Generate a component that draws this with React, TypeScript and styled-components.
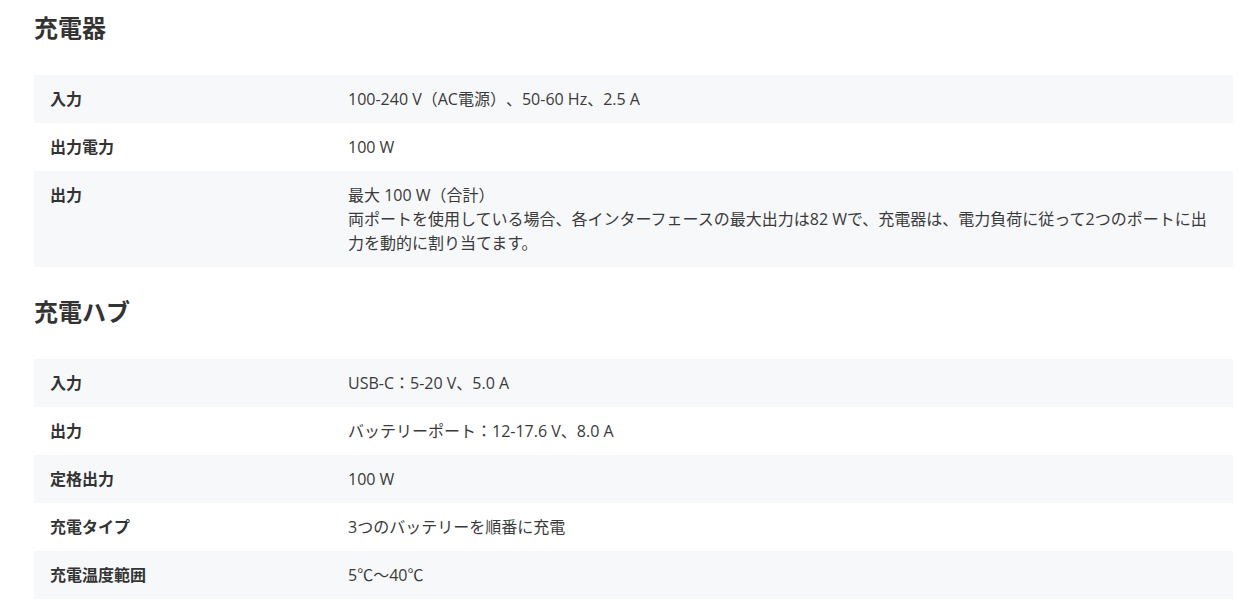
import React from "react";
import styled, { createGlobalStyle } from "styled-components";

const Global = createGlobalStyle`
  html, body { margin: 0; padding: 0; background: #fff; }
  body {
    font-family: "Open Sans", "Noto Sans CJK JP", sans-serif;
    color: #333;
    text-spacing-trim: space-all;
  }
`;

const Page = styled.div`
  padding: 0 6px 0 34px;
`;

const Section = styled.section`
  padding-top: 12px;
  padding-bottom: 17px;
`;

const Heading = styled.h2`
  margin: 0 0 31px;
  font-size: 24px;
  line-height: 32px;
  font-weight: 700;
  color: #333;
`;

const Table = styled.div`
  display: flex;
  flex-direction: column;
`;

const Row = styled.div<{ $alt: boolean }>`
  display: grid;
  grid-template-columns: 298px 1fr;
  background: ${(p) => (p.$alt ? "#f7f8fa" : "#fff")};
  padding: 12px 16px;
  font-size: 16px;
  line-height: 24px;
`;

const Label = styled.div`
  font-weight: 700;
  color: #333;
`;

const Value = styled.div`
  color: #3a3a3a;
  padding-right: 4px;
`;

type Spec = { label: string; value: string[] };

const charger: Spec[] = [
  { label: "入力", value: ["100-240 V（AC電源）、50-60 Hz、2.5 A"] },
  { label: "出力電力", value: ["100 W"] },
  {
    label: "出力",
    value: [
      "最大 100 W（合計）",
      "両ポートを使用している場合、各インターフェースの最大出力は82 Wで、充電器は、電力負荷に従って2つのポートに出力を動的に割り当てます。",
    ],
  },
];

const hub: Spec[] = [
  { label: "入力", value: ["USB-C：5-20 V、5.0 A"] },
  { label: "出力", value: ["バッテリーポート：12-17.6 V、8.0 A"] },
  { label: "定格出力", value: ["100 W"] },
  { label: "充電タイプ", value: ["3つのバッテリーを順番に充電"] },
  { label: "充電温度範囲", value: ["5℃～40℃"] },
];

function SpecTable({ title, items }: { title: string; items: Spec[] }) {
  return (
    <Section>
      <Heading>{title}</Heading>
      <Table>
        {items.map((it, i) => (
          <Row key={i} $alt={i % 2 === 0}>
            <Label>{it.label}</Label>
            <Value>
              {it.value.map((v, j) => (
                <div key={j}>{v}</div>
              ))}
            </Value>
          </Row>
        ))}
      </Table>
    </Section>
  );
}

export default function App() {
  return (
    <Page>
      <Global />
      <SpecTable title="充電器" items={charger} />
      <SpecTable title="充電ハブ" items={hub} />
    </Page>
  );
}
